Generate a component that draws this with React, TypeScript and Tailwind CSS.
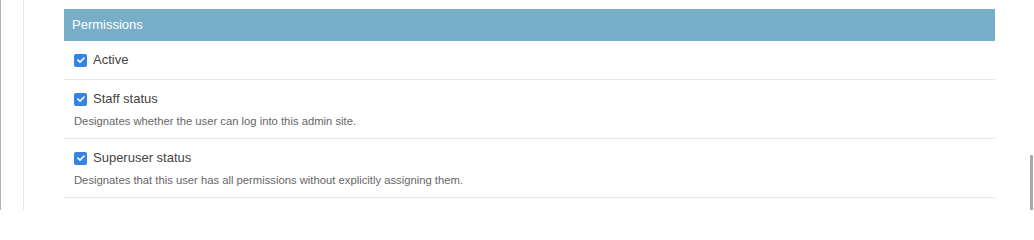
import React from "react";

type PermissionRow = {
  label: string;
  help?: string;
};

const rows: PermissionRow[] = [
  { label: "Active" },
  {
    label: "Staff status",
    help: "Designates whether the user can log into this admin site.",
  },
  {
    label: "Superuser status",
    help: "Designates that this user has all permissions without explicitly assigning them.",
  },
];

function CheckBox() {
  return (
    <span className="flex h-[13px] w-[13px] shrink-0 items-center justify-center rounded-[2px] bg-[#3584e4]">
      <svg viewBox="0 0 12 12" className="h-[10px] w-[10px]" aria-hidden="true">
        <path
          d="M2.3 6.2 4.8 8.6 9.7 3.6"
          fill="none"
          stroke="#fff"
          strokeWidth="1.9"
          strokeLinecap="round"
          strokeLinejoin="round"
        />
      </svg>
    </span>
  );
}

export default function App() {
  return (
    <div
      className="relative flex h-[210px] w-[1034px] overflow-hidden bg-white"
      style={{ fontFamily: '"Liberation Sans", Arial, sans-serif' }}
    >
      {/* sidebar edges */}
      <div className="w-[1px] shrink-0 bg-[#b4b4b4]" />
      <div className="w-[22px] shrink-0" />
      <div className="w-[1px] shrink-0 bg-[#e6e6e6]" />

      <div className="ml-[40px] w-[931px] pt-[9px]">
        <fieldset>
          <h2 className="flex h-[32px] items-center bg-[#79aec8] px-[8px] text-[13px] text-white">
            Permissions
          </h2>
          {rows.map((row) => (
            <div
              key={row.label}
              className="border-b border-[#e8e8e8] px-[10px] pt-[10px] pb-[10px]"
            >
              <div className="flex h-[18px] items-center gap-[6px]">
                <CheckBox />
                <span className="text-[13px] text-[#444]">{row.label}</span>
              </div>
              {row.help && (
                <p className="mt-[6px] text-[11.25px] leading-[14px] text-[#666]">
                  {row.help}
                </p>
              )}
            </div>
          ))}
        </fieldset>
      </div>

      {/* scrollbar thumb */}
      <div className="absolute top-[155px] right-[1px] h-[60px] w-[3px] rounded-t-[1px] bg-[#a8a8a8]" />
    </div>
  );
}
